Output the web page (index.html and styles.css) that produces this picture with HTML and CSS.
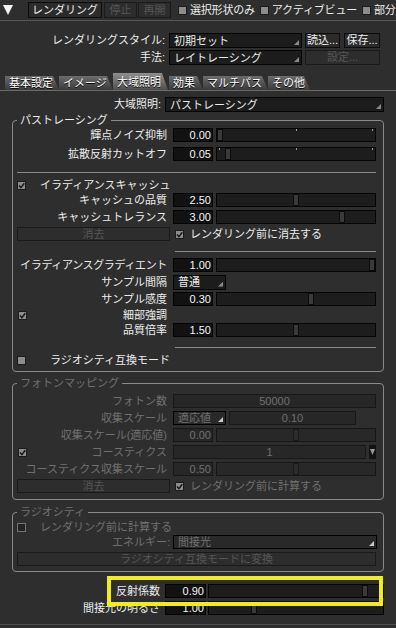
FILE: index.html
```html
<!DOCTYPE html>
<html lang="ja">
<head>
  <meta charset="UTF-8" />
  <meta name="viewport" content="width=device-width, initial-scale=1" />
  <title>レンダリング</title>
  <link rel="stylesheet" href="styles.css">
</head>
<body>
  <div class="topbar">
    <span class="disclosure"></span>
    <button class="tbtn w-render">レンダリング</button>
    <button class="tbtn w-stop" disabled>停止</button>
    <button class="tbtn w-resume" disabled>再開</button>
    <span class="tcheck"><i class="cbox"></i>選択形状のみ</span>
    <span class="tcheck"><i class="cbox"></i>アクティブビュー</span>
    <span class="tcheck"><i class="cbox"></i>部分</span>
  </div>

  <main class="panel">
    <div class="srow">
      <span class="slabel">レンダリングスタイル:</span>
      <div class="select w-style">初期セット<i class="tri"></i></div>
      <button class="pbtn w-load">読込...</button>
      <button class="pbtn w-save">保存...</button>
    </div>
    <div class="srow">
      <span class="slabel">手法:</span>
      <div class="select w-style">レイトレーシング<i class="tri"></i></div>
      <button class="pbtn w-setup" disabled>設定...</button>
    </div>

    <nav class="tabs">
      <span class="tab">基本設定</span>
      <span class="tab">イメージ</span>
      <span class="tab active">大域照明</span>
      <span class="tab">効果</span>
      <span class="tab">マルチパス</span>
      <span class="tab">その他</span>
    </nav>

    <div class="grow">
      <span class="slabel">大域照明:</span>
      <div class="select w-gi">パストレーシング<i class="tri"></i></div>
    </div>

    <!-- パストレーシング -->
    <fieldset class="group g-path">
      <legend>パストレーシング</legend>

      <div class="row">
        <span class="lbl">輝点ノイズ抑制</span>
        <span class="num">0.00</span>
        <div class="slider ticks"><i class="thumb" style="--p: 0"></i></div>
      </div>
      <div class="row mt5">
        <span class="lbl">拡散反射カットオフ</span>
        <span class="num">0.05</span>
        <div class="slider ticks"><i class="thumb" style="--p: 0.05"></i></div>
      </div>

      <div class="sep full"></div>

      <div class="row mt5">
        <i class="cbox on"><svg viewBox="0 0 7 7"><path d="M1 3.6 L2.9 5.6 L6.3 1.2"/></svg></i>
        <span class="clabel">イラディアンスキャッシュ</span>
      </div>
      <div class="row mt1">
        <span class="lbl">キャッシュの品質</span>
        <span class="num">2.50</span>
        <div class="slider"><i class="thumb" style="--p: 0.5"></i></div>
      </div>
      <div class="row">
        <span class="lbl">キャッシュトレランス</span>
        <span class="num">3.00</span>
        <div class="slider"><i class="thumb" style="--p: 0.8"></i></div>
      </div>
      <div class="row">
        <button class="wbtn" disabled>消去</button>
        <i class="cbox on after-btn"><svg viewBox="0 0 7 7"><path d="M1 3.6 L2.9 5.6 L6.3 1.2"/></svg></i>
        <span class="blabel">レンダリング前に消去する</span>
      </div>

      <div class="sep"></div>

      <div class="row mt6">
        <span class="lbl tight">イラディアンスグラディエント</span>
        <span class="num">1.00</span>
        <div class="slider"><i class="thumb" style="--p: 1"></i></div>
      </div>
      <div class="row">
        <span class="lbl">サンプル間隔</span>
        <div class="select w-small">普通<i class="tri"></i></div>
      </div>
      <div class="row">
        <span class="lbl">サンプル感度</span>
        <span class="num">0.30</span>
        <div class="slider"><i class="thumb" style="--p: 0.6"></i></div>
      </div>
      <div class="row mt2">
        <span class="lbl split">
          <i class="cbox on"><svg viewBox="0 0 7 7"><path d="M1 3.6 L2.9 5.6 L6.3 1.2"/></svg></i>
          細部強調
        </span>
      </div>
      <div class="row mt1">
        <span class="lbl">品質倍率</span>
        <span class="num">1.50</span>
        <div class="slider"><i class="thumb" style="--p: 0.5"></i></div>
      </div>

      <div class="sep"></div>

      <div class="row mt5">
        <i class="cbox"></i>
        <span class="clabel far">ラジオシティ互換モード</span>
      </div>
    </fieldset>

    <!-- フォトンマッピング（無効） -->
    <fieldset class="group off g-photon">
      <legend>フォトンマッピング</legend>

      <div class="row">
        <span class="lbl">フォトン数</span>
        <span class="field w-photons">50000</span>
      </div>
      <div class="row">
        <span class="lbl">収集スケール</span>
        <div class="select dim w-small">適応値<i class="tri"></i></div>
        <span class="field w-scale">0.10</span>
      </div>
      <div class="row">
        <span class="lbl">収集スケール(適応値)</span>
        <span class="num">0.00</span>
        <div class="slider"><i class="thumb" style="--p: 0.5"></i></div>
      </div>
      <div class="row">
        <span class="lbl split">
          <i class="cbox on"><svg viewBox="0 0 7 7"><path d="M1 3.6 L2.9 5.6 L6.3 1.2"/></svg></i>
          コースティクス
        </span>
        <span class="field w-caustic">1</span>
        <span class="spin"><i></i></span>
      </div>
      <div class="row">
        <span class="lbl">コースティクス収集スケール</span>
        <span class="num">0.50</span>
        <div class="slider"><i class="thumb" style="--p: 0.5"></i></div>
      </div>
      <div class="row">
        <button class="wbtn" disabled>消去</button>
        <i class="cbox on after-btn"><svg viewBox="0 0 7 7"><path d="M1 3.6 L2.9 5.6 L6.3 1.2"/></svg></i>
        <span class="blabel">レンダリング前に計算する</span>
      </div>
    </fieldset>

    <!-- ラジオシティ（無効） -->
    <fieldset class="group off g-radio">
      <legend>ラジオシティ</legend>

      <div class="row">
        <i class="cbox empty"></i>
        <span class="clabel">レンダリング前に計算する</span>
      </div>
      <div class="row mt1">
        <span class="lbl wide">エネルギー:</span>
        <div class="select dim w-energy">間接光<i class="tri"></i></div>
      </div>
      <div class="row">
        <button class="fullbtn" disabled>ラジオシティ互換モードに変換</button>
      </div>
    </fieldset>

    <div class="extra">
      <div class="highlight"></div>
      <div class="brow">
        <span class="blbl">反射係数</span>
        <span class="num">0.90</span>
        <div class="slider"><i class="thumb" style="--p: 0.91"></i></div>
      </div>
      <div class="brow">
        <span class="blbl">間接光の明るさ</span>
        <span class="num">1.00</span>
        <div class="slider"><i class="thumb" style="--p: 0.25"></i></div>
      </div>
    </div>
    <div class="baseline"></div>
  </main>
</body>
</html>
```

FILE: styles.css
```css
:root {
  --color-bg: #2e2e2e;
  --color-text: #ececec;
  --color-dim: #707070;
  --color-frame: #8a8a8a;
  --color-well: #121212;
  --color-track: #1d1d1d;
  --color-mark: #f2ec1e;
}

* {
  box-sizing: border-box;
}

body {
  margin: 0;
  width: 396px;
  height: 628px;
  overflow: hidden;
  background: var(--color-bg);
  color: var(--color-text);
  font-family: "Liberation Sans", "Noto Sans CJK JP", sans-serif;
  font-size: 11px;
  line-height: 14px;
}

button {
  font: inherit;
  color: inherit;
  margin: 0;
  padding: 0;
  height: 15px;
  line-height: 13px;
  background: #2b2b2b;
  border: 1px solid #0c0c0c;
  white-space: nowrap;
}

button:disabled {
  color: #565656;
  background: #2d2d2d;
  border-color: #1a1a1a;
}

/* top bar */
.topbar {
  display: flex;
  align-items: center;
  height: 20px;
  padding-left: 3px;
  white-space: nowrap;
  overflow: hidden;
}

.topbar > * {
  flex: none;
}

.disclosure {
  width: 10px;
  height: 10px;
  margin-right: 15px;
  background: #f2f2f2;
  clip-path: polygon(0 0, 100% 0, 50% 100%);
}

.tbtn {
  height: 16px;
}

.w-render { width: 74px; }
.w-stop { width: 33px; margin-left: 2px; }
.w-resume { width: 33px; margin-left: 1px; }

.tcheck {
  display: flex;
  align-items: center;
  gap: 3px;
  margin-left: 7px;
  letter-spacing: -0.2px;
}

.tcheck + .tcheck {
  margin-left: 5px;
}

/* checkbox */
.cbox {
  flex: none;
  display: inline-flex;
  align-items: center;
  justify-content: center;
  width: 9px;
  height: 9px;
  background: #8c8c8c;
  border: 1px solid #1c1c1c;
}

.cbox svg {
  width: 7px;
  height: 7px;
  fill: none;
  stroke: #161616;
  stroke-width: 1.4;
}

.cbox.empty {
  background: #242424;
  border-color: #727272;
}

/* panel */
.panel {
  border-top: 1px solid #585858;
  padding-top: 12px;
}

.srow {
  display: flex;
  height: 15px;
}

.srow + .srow {
  margin-top: 2px;
}

.slabel {
  flex: none;
  width: 165px;
  text-align: right;
  white-space: nowrap;
}

.select {
  flex: none;
  display: flex;
  align-items: center;
  height: 15px;
  padding-left: 4px;
  background: #1c1c1c;
  border: 1px solid #040404;
  white-space: nowrap;
}

.tri {
  align-self: flex-end;
  width: 5px;
  height: 5px;
  margin: 0 2px 2px auto;
  background: #8a8a8a;
  clip-path: polygon(100% 0, 100% 100%, 0 100%);
}

.w-style { width: 133px; margin-left: 4px; }

.pbtn { flex: none; width: 35px; margin-left: 3px; }
.w-save { width: 36px; margin-left: 4px; }
.w-setup { width: 75px; }

/* tabs */
.tabs {
  display: flex;
  align-items: flex-end;
  height: 18px;
  margin-top: 8px;
  padding-left: 5px;
  border-bottom: 1px solid #6a6a6a;
}

.tab {
  flex: none;
  height: 14px;
  padding-left: 4px;
  color: #fff;
  text-shadow: 0 1px 0 #000;
  background: linear-gradient(#6c6c6c, #3a3a3a);
  clip-path: polygon(0 0, calc(100% - 6px) 0, 100% 100%, 0 100%);
  white-space: nowrap;
}

.tab.active {
  height: 17px;
  padding-top: 2px;
  background: linear-gradient(#8e8e8e, #4e4e4e);
}

.tab:nth-child(1) { width: 54px; }
.tab:nth-child(2) { width: 54px; }
.tab:nth-child(3) { width: 55px; }
.tab:nth-child(4) { width: 34px; margin-left: 1px; }
.tab:nth-child(5) { width: 65px; }
.tab:nth-child(6) { width: 42px; }

.grow {
  display: flex;
  margin-top: 6px;
}

.grow .slabel { width: 161px; }
.w-gi { width: 219px; margin-left: 4px; }

/* group boxes */
.group {
  min-width: 0;
  margin: 1px 12px 0;
  padding: 1px 7px 4px 4px;
  border: 1px solid var(--color-frame);
  border-radius: 4px;
}

.group legend {
  padding: 0 3px;
  line-height: 14px;
}

.g-photon { margin-top: 4px; padding-top: 4px; padding-bottom: 6px; }
.g-radio { margin-top: 5px; padding-top: 1px; padding-bottom: 5px; }

.off {
  color: var(--color-dim);
}

.row {
  display: flex;
  align-items: center;
  height: 14px;
  margin-top: 3px;
  white-space: nowrap;
}

.group > .row:first-of-type { margin-top: 0; }
.row.mt1 { margin-top: 1px; }
.row.mt2 { margin-top: 2px; }
.row.mt5 { margin-top: 5px; }
.row.mt6 { margin-top: 6px; }

.lbl {
  flex: none;
  width: 150px;
  text-align: right;
}

.lbl.tight { letter-spacing: -0.35px; }

.lbl.split {
  display: flex;
  justify-content: space-between;
  align-items: center;
  padding-left: 1px;
}

.lbl.wide { width: 153px; }

.clabel { margin-left: 14px; }
.clabel.far { margin-left: 24px; }

.num {
  flex: none;
  width: 40px;
  height: 14px;
  margin-left: 6px;
  padding-right: 1px;
  background: var(--color-well);
  border: 1px solid #030303;
  text-align: right;
  line-height: 12px;
  color: #f4f4f4;
}

.slider {
  flex: none;
  display: flex;
  width: 160px;
  height: 14px;
  margin-left: 3px;
  background: var(--color-track);
  border: 1px solid #050505;
}

.slider.ticks {
  background-image: linear-gradient(#9a9a9a, #9a9a9a), linear-gradient(#9a9a9a, #9a9a9a), linear-gradient(#9a9a9a, #9a9a9a);
  background-size: 1px 2px;
  background-repeat: no-repeat;
  background-position: 2px 0, 50% 0, calc(100% - 2px) 0;
}

.thumb {
  flex: none;
  width: 6px;
  height: 100%;
  margin-left: calc((100% - 6px) * var(--p));
  background: #3a3a3a;
  border: 1px solid #0c0c0c;
}

.sep {
  height: 1px;
  margin: 10px 0 0 158px;
  background: var(--color-frame);
}

.sep.full {
  margin: 11px 0 0;
}

.w-small { width: 53px; margin-left: 6px; }

.wbtn { flex: none; width: 153px; height: 14px; }
.after-btn { margin-left: 5px; }
.blabel { margin-left: 6px; }

/* disabled controls */
.off .num {
  background: #272727;
  border-color: #171717;
  color: var(--color-dim);
}

.off .slider {
  background: #282828;
  border-color: #171717;
}

.off .thumb {
  background: #2c2c2c;
  border-color: #1a1a1a;
}

.off .blabel { color: var(--color-dim); }

.field {
  flex: none;
  height: 14px;
  margin-left: 6px;
  background: #272727;
  border: 1px solid #171717;
  text-align: center;
  line-height: 12px;
}

.select.dim {
  height: 14px;
  background: #292929;
  border-color: #000;
}

.select.dim .tri { background: #c8c8c8; }

.w-photons { width: 203px; }
.w-scale { width: 127px; margin-left: 3px; }
.w-caustic { width: 193px; }
.w-energy { width: 204px; margin-left: 3px; }

.spin {
  flex: none;
  display: flex;
  align-items: center;
  justify-content: center;
  width: 7px;
  height: 14px;
  margin-left: 3px;
  background: #111;
}

.spin i {
  width: 5px;
  height: 6px;
  background: #9a9a9a;
  clip-path: polygon(0 0, 100% 0, 50% 100%);
}

.fullbtn { flex: none; width: 359px; height: 14px; }

/* bottom rows */
.extra {
  position: relative;
  margin-top: 12px;
}

.brow {
  display: flex;
  align-items: center;
  height: 14px;
  white-space: nowrap;
}

.brow + .brow { margin-top: 3px; }

.blbl {
  flex: none;
  width: 160px;
  text-align: right;
}

.brow .num { width: 41px; margin-left: 5px; }
.brow .slider { width: 176px; margin-left: 2px; }

.highlight {
  position: absolute;
  left: 107px;
  top: -8px;
  width: 276px;
  height: 30px;
  border: 4px solid var(--color-mark);
  z-index: 1;
}

.baseline {
  height: 1px;
  margin-top: 9px;
  background: #505050;
}
```
